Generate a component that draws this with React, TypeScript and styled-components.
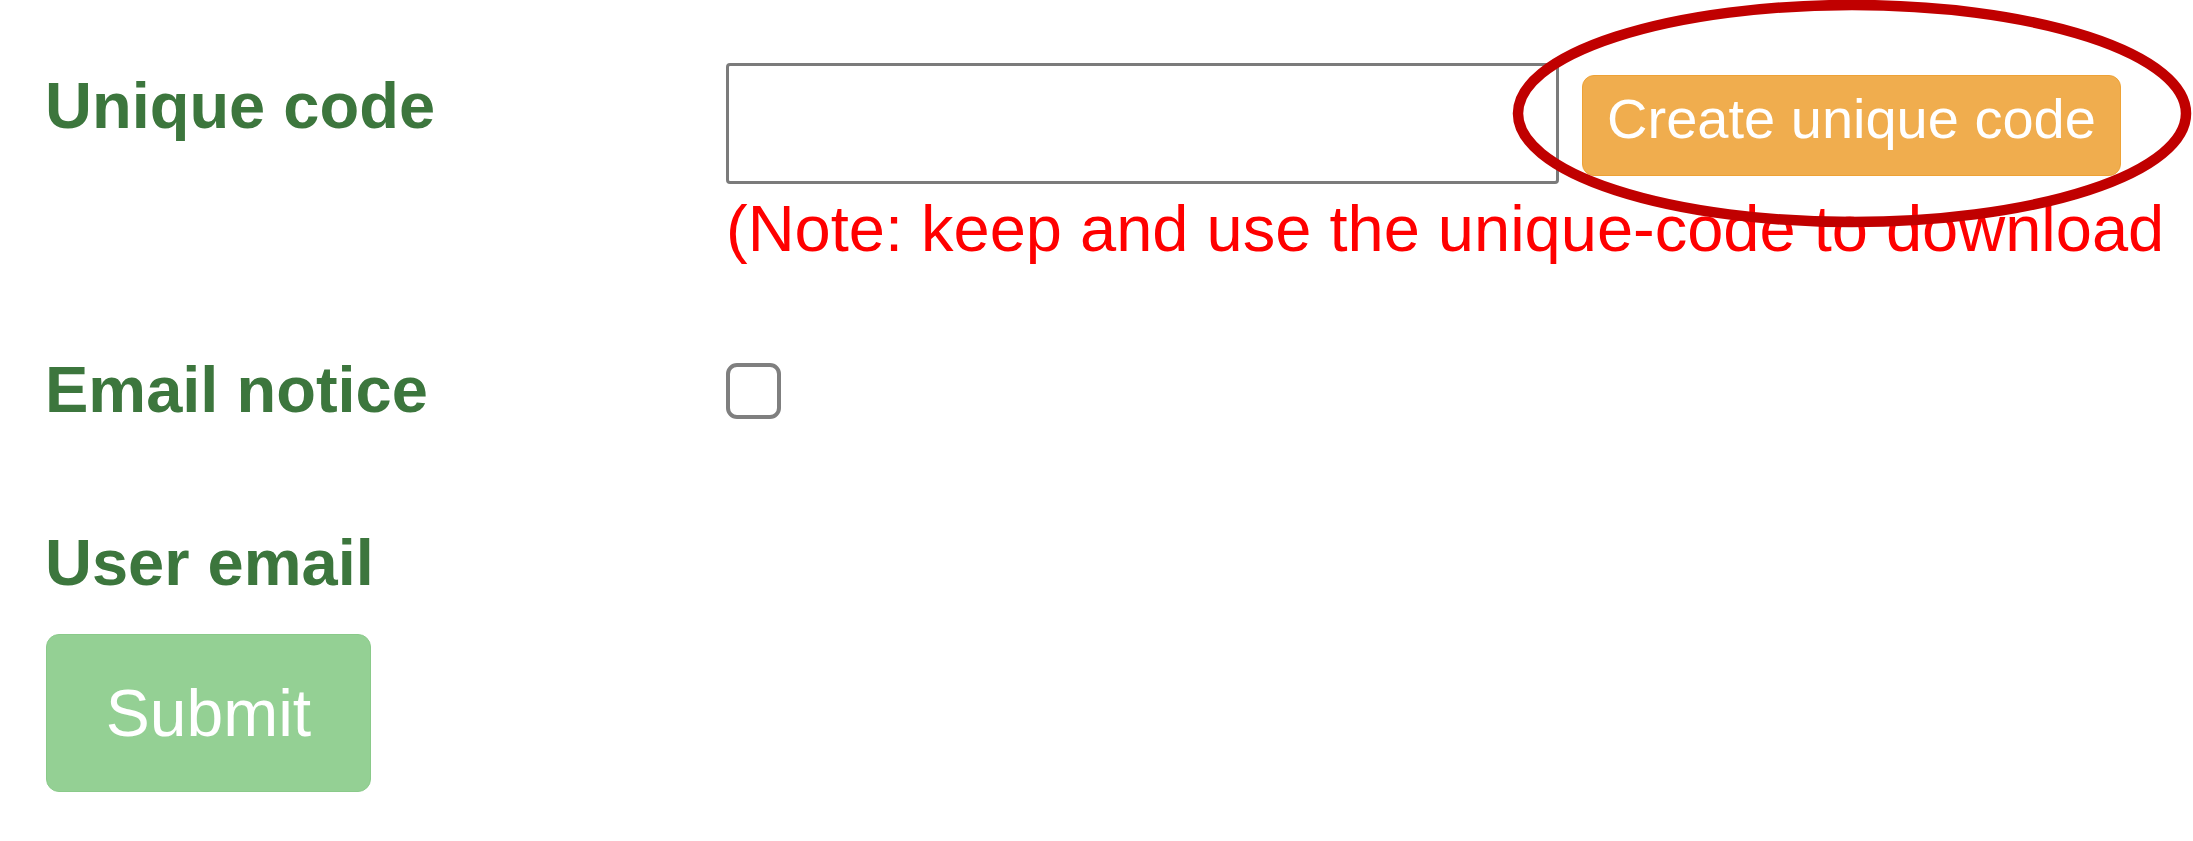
import React from "react";
import styled, { createGlobalStyle } from "styled-components";

const GlobalStyle = createGlobalStyle`
  html, body {
    margin: 0;
    padding: 0;
    background: #ffffff;
  }
  body {
    font-family: "Liberation Sans", Arial, sans-serif;
  }
`;

const Page = styled.div`
  position: relative;
  width: 2193px;
  height: 841px;
  overflow: hidden;
  box-sizing: border-box;
  padding: 63px 0 0 45px;
`;

const Form = styled.form`
  display: flex;
  flex-direction: column;
  align-items: flex-start;
  margin: 0;
`;

const FieldRow = styled.div<{ $gap: number }>`
  display: grid;
  grid-template-columns: 681px auto;
  align-items: start;
  margin-top: ${(p) => p.$gap}px;
`;

const FieldLabel = styled.label<{ $offset?: number }>`
  margin-top: ${(p) => p.$offset ?? 0}px;
  font-size: 65px;
  line-height: 75px;
  font-weight: 700;
  color: #3c763d;
  white-space: nowrap;
`;

const FieldBody = styled.div`
  display: flex;
  flex-direction: column;
  align-items: flex-start;
`;

const InputLine = styled.div`
  display: flex;
  align-items: flex-start;
  gap: 23px;
`;

const CodeInput = styled.input`
  box-sizing: border-box;
  width: 833px;
  height: 121px;
  margin: 0;
  padding: 0 14px;
  border: 3px solid #7b7b7b;
  border-radius: 4px;
  background: #ffffff;
  font-family: inherit;
  font-size: 56px;
  outline: none;
`;

const CreateButton = styled.button`
  box-sizing: border-box;
  width: 539px;
  height: 101px;
  margin-top: 12px;
  padding: 11px 0 0;
  display: flex;
  justify-content: center;
  align-items: flex-start;
  background: #f0ad4e;
  border: 1px solid #eea236;
  border-radius: 12px;
  color: #ffffff;
  font-family: inherit;
  font-size: 56px;
  line-height: 64px;
  white-space: nowrap;
  cursor: pointer;
`;

const Note = styled.p`
  margin: 7px 0 0;
  color: #ff0000;
  font-size: 65px;
  line-height: 75px;
  white-space: nowrap;
`;

const Checkbox = styled.input.attrs({ type: "checkbox" })`
  appearance: none;
  -webkit-appearance: none;
  box-sizing: border-box;
  width: 55px;
  height: 56px;
  margin: 11px 0 0;
  border: 4px solid #7f7f7f;
  border-radius: 11px;
  background: #ffffff;
`;

const SubmitButton = styled.button`
  box-sizing: border-box;
  width: 325px;
  height: 158px;
  margin: 34px 0 0 1px;
  padding: 0;
  display: flex;
  align-items: center;
  justify-content: center;
  background: #5cb85c;
  border: 1px solid #4cae4c;
  border-radius: 13px;
  color: #ffffff;
  font-family: inherit;
  font-size: 66px;
  line-height: 76px;
  opacity: 0.65;
`;

const Annotation = styled.svg`
  position: absolute;
  left: 1510px;
  top: 0;
  width: 683px;
  height: 232px;
  overflow: visible;
  pointer-events: none;
`;

export default function App() {
  return (
    <>
      <GlobalStyle />
      <Page>
        <Form onSubmit={(e) => e.preventDefault()}>
          <FieldRow $gap={0}>
            <FieldLabel $offset={5} htmlFor="unique-code">
              Unique code
            </FieldLabel>
            <FieldBody>
              <InputLine>
                <CodeInput id="unique-code" type="text" />
                <CreateButton type="button">Create unique code</CreateButton>
              </InputLine>
              <Note>(Note: keep and use the unique-code to download</Note>
            </FieldBody>
          </FieldRow>
          <FieldRow $gap={86}>
            <FieldLabel htmlFor="email-notice">Email notice</FieldLabel>
            <Checkbox id="email-notice" />
          </FieldRow>
          <FieldRow $gap={98}>
            <FieldLabel>User email</FieldLabel>
          </FieldRow>
          <SubmitButton type="submit" disabled>
            Submit
          </SubmitButton>
        </Form>
        <Annotation viewBox="0 0 683 232">
          <ellipse
            cx="342"
            cy="113.5"
            rx="334"
            ry="108.5"
            fill="none"
            stroke="#c00000"
            strokeWidth="10.5"
          />
        </Annotation>
      </Page>
    </>
  );
}
